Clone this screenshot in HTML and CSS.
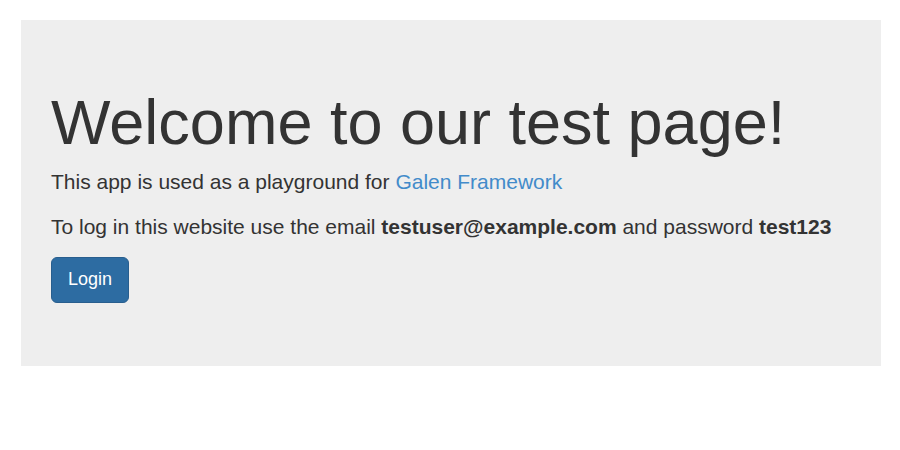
FILE: index.html
```html
<!DOCTYPE html>
<html>
<head>
<meta charset="utf-8">
<link rel="stylesheet" href="styles.css">
</head>
<body>
<div class="page">
  <div class="jumbotron">
    <h1>Welcome to our test page!</h1>
    <p>This app is used as a playground for <a href="#">Galen Framework</a></p>
    <p>To log in this website use the email <b>testuser@example.com</b> and password <b>test123</b></p>
    <p><a class="btn" href="#">Login</a></p>
  </div>
</div>
</body>
</html>
```
FILE: styles.css
```css
html, body {
  margin: 0;
  padding: 0;
  background: #fff;
}
body {
  font-family: "Liberation Sans", Arial, Helvetica, sans-serif;
  font-size: 14px;
  line-height: 1.42857143;
  color: #333;
}
.page {
  padding: 20px 19px 0 21px;
}
.jumbotron {
  background: #eee;
  padding: 48px 30px;
}
.jumbotron h1 {
  font-size: 63px;
  font-weight: 500;
  line-height: 1.1;
  margin: 20px 0 10px;
  color: inherit;
}
.jumbotron p {
  font-size: 21px;
  font-weight: 200;
  margin: 0 0 15px;
}
.jumbotron b {
  font-weight: bold;
}
a {
  color: #428bca;
  text-decoration: none;
}
.btn {
  display: inline-block;
  padding: 10px 16px;
  font-size: 18px;
  line-height: 1.33;
  border-radius: 6px;
  background: #2d6ca2;
  border: 1px solid #285e8e;
  color: #fff;
  vertical-align: middle;
}
```
